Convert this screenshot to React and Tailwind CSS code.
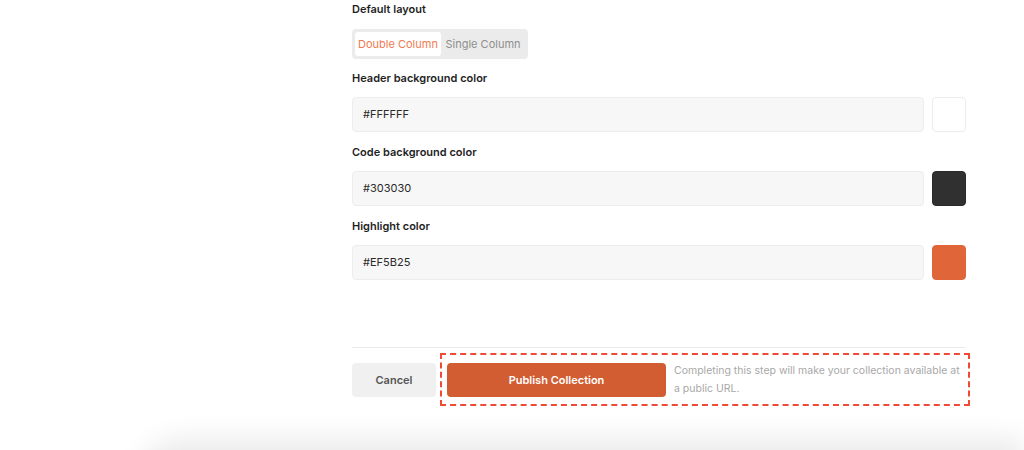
import React from "react";

function Label({ children }) {
  return (
    <div className="h-4 text-[11px] leading-4 font-semibold text-[#1f1f1f]">{children}</div>
  );
}

function ColorRow({ value, swatch }) {
  return (
    <div className="flex gap-2 h-[35px]">
      <div className="flex-1 flex items-center rounded-[4px] border border-[#ededed] bg-[#f7f7f7] px-[10px] text-[11px] text-[#2a2a2a]">
        {value}
      </div>
      <div className={`w-[34px] rounded-[4px] border ${swatch}`} />
    </div>
  );
}

export default function App() {
  return (
    <div
      className="relative w-[1024px] h-[450px] overflow-hidden bg-white"
      style={{ fontFamily: "Inter, 'Noto Sans', sans-serif" }}
    >
      <div className="ml-[352px] w-[614px] pt-[1px] flex flex-col">
        <Label>Default layout</Label>
        <div className="mt-[12px] flex w-[176px] h-[30px] items-center rounded-[4px] bg-[#ebebeb] p-[3px]">
          <div className="h-full w-[86px] shrink-0 flex items-center justify-center rounded-[3px] bg-white text-[11px] text-[#ef7a52]">
            Double Column
          </div>
          <div className="flex-1 flex items-center justify-center text-[11px] text-[#8e8e8e]">
            Single Column
          </div>
        </div>
        <div className="mt-[11px]"><Label>Header background color</Label></div>
        <div className="mt-[11px]"><ColorRow value="#FFFFFF" swatch="bg-white border-[#ececec]" /></div>
        <div className="mt-[12px]"><Label>Code background color</Label></div>
        <div className="mt-[11px]"><ColorRow value="#303030" swatch="bg-[#303030] border-[#2a2a2a]" /></div>
        <div className="mt-[12px]"><Label>Highlight color</Label></div>
        <div className="mt-[11px]"><ColorRow value="#EF5B25" swatch="bg-[#e0663a] border-[#e0663a]" /></div>
        <div className="mt-[67px] h-px bg-[#ebebeb]" />
        <div className="relative mt-[14px] flex items-center">
          <button className="w-[84px] shrink-0 h-[34px] rounded-[4px] bg-[#f0f0f0] text-[11px] font-semibold text-[#555]">
            Cancel
          </button>
          <button className="ml-[11px] w-[219px] shrink-0 h-[34px] rounded-[4px] bg-[#d35d33] text-[11px] font-semibold text-white">
            Publish Collection
          </button>
          <p className="ml-[8px] w-[292px] shrink-0 text-[10.5px] leading-[18px] text-[#a8a8a8]">
            Completing this step will make your collection available at a public URL.
          </p>
          <div className="absolute left-[88px] top-[-9px] w-[530px] h-[53px] border-2 border-dashed border-[#ef4a35] pointer-events-none" />
        </div>
      </div>
      <div className="absolute left-[140px] right-0 top-[452px] h-10 rounded-tl-[40px] shadow-[0_-12px_30px_rgba(0,0,0,0.09)]" />
    </div>
  );
}
